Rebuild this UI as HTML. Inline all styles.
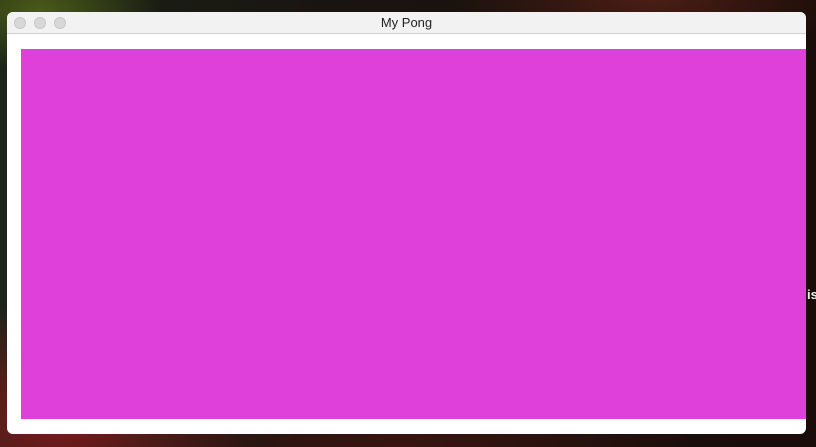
<!DOCTYPE html>
<html><head><meta charset="utf-8"><style>
html,body{margin:0;padding:0;width:816px;height:447px;overflow:hidden;background:#140d0a;font-family:"Liberation Sans",sans-serif;}
.bg{position:absolute;inset:0;background:
radial-gradient(ellipse 120px 60px at 40px 10px,#4a5a18 0%,rgba(40,50,20,0) 100%),
radial-gradient(ellipse 200px 120px at 60px 420px,#7a1a1a 0%,rgba(80,20,20,0) 100%),
radial-gradient(ellipse 300px 80px at 400px 447px,#3a1410 0%,rgba(40,15,10,0) 100%),
radial-gradient(ellipse 200px 60px at 650px 0px,#4a1e14 0%,rgba(40,15,10,0) 100%),
linear-gradient(90deg,#1a2418,#1a1410 40%,#1a0c08);}
.win{position:absolute;left:7px;top:12px;width:799px;height:422px;background:#fff;border-radius:6px;overflow:hidden;}
.tb{height:21px;background:#f2f2f2;border-bottom:1px solid #cfcfcf;position:relative;text-align:center;font-size:13px;line-height:21px;color:#222;}
.dot{position:absolute;top:5px;width:12px;height:12px;border-radius:50%;background:#d8d8d8;border:0.5px solid #c8c8c8;box-sizing:border-box;}
.mag{position:absolute;left:14px;top:37px;width:785px;height:370px;background:#e040da;}
.is{position:absolute;left:807px;top:287px;color:#eee;font-weight:bold;font-size:13px;}
</style></head><body>
<div class="bg"></div>
<div class="is">is</div>
<div class="win">
<div class="tb"><span class="dot" style="left:7px"></span><span class="dot" style="left:27px"></span><span class="dot" style="left:47px"></span>My Pong</div>
<div class="mag"></div>
</div>
</body></html>
